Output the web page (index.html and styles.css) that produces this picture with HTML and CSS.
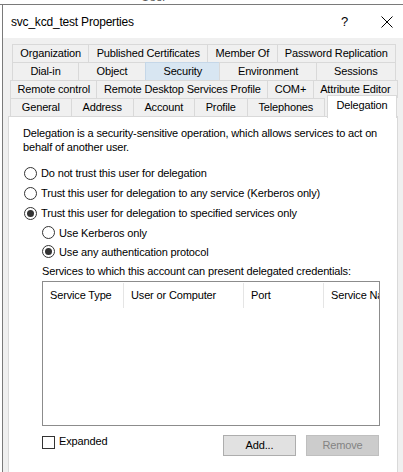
FILE: index.html
```html
<!DOCTYPE html>
<html>
<head>
<meta charset="utf-8">
<link rel="stylesheet" href="styles.css">
</head>
<body>
<div class="topfrag"><span class="frag">User</span></div>
<div class="window">
  <div class="titlebar">
    <span class="title">svc_kcd_test Properties</span>
    <span class="help">?</span>
    <span class="close"><svg width="12" height="12" viewBox="0 0 12 12"><path d="M0.5 0.5 L11.5 11.5 M11.5 0.5 L0.5 11.5" stroke="#000" stroke-width="1" fill="none"/></svg></span>
  </div>
  <div class="client">
    <div class="tabs">
      <div class="tabrow back">
        <div class="tab">Organization</div>
        <div class="tab">Published Certificates</div>
        <div class="tab">Member Of</div>
        <div class="tab">Password Replication</div>
      </div>
      <div class="tabrow back">
        <div class="tab">Dial-in</div>
        <div class="tab">Object</div>
        <div class="tab hover">Security</div>
        <div class="tab">Environment</div>
        <div class="tab">Sessions</div>
      </div>
      <div class="tabrow mid">
        <div class="tab">Remote control</div>
        <div class="tab">Remote Desktop Services Profile</div>
        <div class="tab">COM+</div>
        <div class="tab">Attribute Editor</div>
      </div>
      <div class="tabrow front">
        <div class="tab">General</div>
        <div class="tab">Address</div>
        <div class="tab">Account</div>
        <div class="tab">Profile</div>
        <div class="tab">Telephones</div>
        <div class="tab selected">Delegation</div>
      </div>
    </div>
    <div class="panel">
      <p class="intro">Delegation is a security-sensitive operation, which allows services to act on behalf of another user.</p>
      <div class="options">
        <label class="radio"><span class="dot"></span>Do not trust this user for delegation</label>
        <label class="radio"><span class="dot"></span>Trust this user for delegation to any service (Kerberos only)</label>
        <label class="radio"><span class="dot on"></span>Trust this user for delegation to specified services only</label>
        <div class="sub">
          <label class="radio"><span class="dot"></span>Use Kerberos only</label>
          <label class="radio"><span class="dot on"></span>Use any authentication protocol</label>
          <div class="caption">Services to which this account can present delegated credentials:</div>
          <div class="listbox">
            <div class="lhead">
              <div class="col c1">Service Type</div>
              <div class="col c2">User or Computer</div>
              <div class="col c3">Port</div>
              <div class="col c4">Service Name</div>
            </div>
          </div>
          <div class="bottom">
            <label class="check"><span class="box"></span>Expanded</label>
            <div class="buttons">
              <div class="btn">Add...</div>
              <div class="btn disabled">Remove</div>
            </div>
          </div>
        </div>
      </div>
    </div>
  </div>
</div>
</body>
</html>
```
FILE: styles.css
```css
html, body {
  margin: 0;
  padding: 0;
  background: #ffffff;
  width: 403px;
  height: 472px;
  overflow: hidden;
  font-family: "Liberation Sans", Arial, sans-serif;
  font-size: 11px;
  color: #000;
}

.topfrag {
  height: 4px;
  overflow: hidden;
}

.frag {
  display: block;
  margin-left: 141px;
  margin-top: -9px;
  font-size: 12px;
  line-height: 12px;
  color: #555;
}

.window {
  border-top: 1px solid #7a7a7a;
  padding-left: 2px;
  height: 467px;
}

.titlebar {
  background: #fff;
  border-left: 1px solid #7a7a7a;
  height: 33px;
  display: flex;
  align-items: center;
  padding-left: 8px;
}

.title {
  font-size: 12px;
  letter-spacing: -0.2px;
  flex: 1;
  padding-top: 1px;
}

.help {
  font-size: 13px;
  width: 14px;
  margin-right: 26px;
}

.close {
  width: 12px;
  height: 12px;
  margin-right: 10px;
  display: flex;
}

.client {
  background: #f0f0f0;
  border-left: 1px solid #7a7a7a;
  height: 434px;
  padding-top: 6px;
  padding-left: 6px;
}

.tabs {
  display: flex;
  flex-direction: column;
  width: 390px;
}

.tabrow {
  display: flex;
  height: 18px;
}

.tabrow.back {
  margin-left: 3px;
  margin-right: 3px;
}

.tabrow.mid,
.tabrow.front {
  margin-left: 1px;
  margin-right: 1px;
}

.tab {
  flex: 1 1 auto;
  text-align: center;
  line-height: 17px;
  background: #f0f0f0;
  border: 1px solid #d9d9d9;
  border-bottom: none;
  margin-left: -1px;
  white-space: nowrap;
  padding: 0 5px;
  letter-spacing: -0.15px;
}

.tab:first-child {
  margin-left: 0;
}

.tab.hover {
  background: #d8e6f2;
  border-color: #c5d7e8;
}

.tab.selected {
  flex: none;
  width: 68px;
  padding: 0;
  background: #fff;
  border-color: #d9d9d9;
  margin-top: -3px;
  height: 22px;
  line-height: 19px;
  position: relative;
  z-index: 1;
  margin-left: 2px;
  margin-right: 1px;
}

.panel {
  background: #fff;
  border: 1px solid #d9d9d9;
  height: 360px;
  width: 388px;
  margin-left: -1px;
}

.intro {
  margin: 9px 12px 0 14px;
  line-height: 14px;
  letter-spacing: -0.15px;
}

.options {
  margin-top: 9px;
  padding-left: 15px;
}

.radio {
  display: flex;
  align-items: center;
  height: 20px;
  letter-spacing: -0.15px;
  white-space: nowrap;
}

.sub .radio {
  height: 19px;
}

.dot {
  width: 11px;
  height: 11px;
  border: 1px solid #333;
  border-radius: 50%;
  background: #fff;
  margin-right: 4px;
  display: flex;
  align-items: center;
  justify-content: center;
  flex: none;
}

.dot.on::after {
  content: "";
  width: 7px;
  height: 7px;
  border-radius: 50%;
  background: #333;
}

.sub {
  padding-left: 18px;
}

.caption {
  height: 20px;
  line-height: 20px;
  letter-spacing: -0.15px;
  white-space: nowrap;
}

.listbox {
  width: 336px;
  height: 143px;
  border: 1px solid #8c8c8c;
  background: #fff;
  overflow: hidden;
}

.lhead {
  display: flex;
  height: 25px;
  margin-top: 1px;
}

.col {
  flex: none;
  line-height: 25px;
  border-right: 1px solid #e5e5e5;
  padding-left: 7px;
  white-space: nowrap;
  box-sizing: border-box;
  letter-spacing: -0.15px;
}

.c1 { width: 81px; }
.c2 { width: 120px; }
.c3 { width: 80px; }
.c4 { width: 90px; border-right: none; }

.bottom {
  display: flex;
  justify-content: space-between;
  width: 338px;
  margin-top: 9px;
}

.check {
  display: flex;
  align-items: flex-start;
  height: 22px;
  letter-spacing: -0.15px;
}

.box {
  width: 11px;
  height: 11px;
  border: 1px solid #333;
  background: #fff;
  margin-right: 4px;
  margin-top: 1px;
}

.buttons {
  display: flex;
  gap: 10px;
  margin-right: 1px;
}

.btn {
  width: 71px;
  height: 19px;
  line-height: 19px;
  text-align: center;
  background: #e1e1e1;
  border: 1px solid #adadad;
  letter-spacing: -0.15px;
}

.btn.disabled {
  background: #cccccc;
  border-color: #bfbfbf;
  color: #838383;
}
```
